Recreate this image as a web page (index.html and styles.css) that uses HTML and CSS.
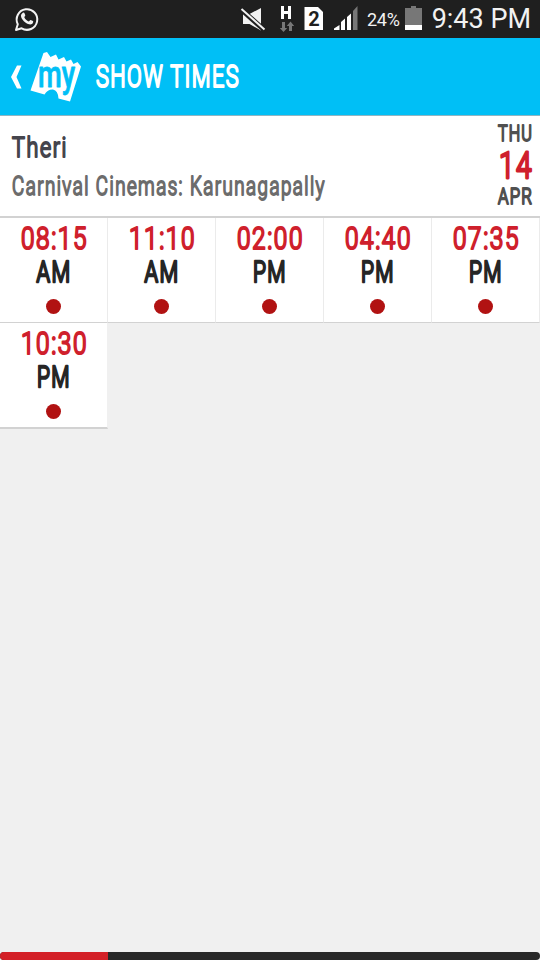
FILE: index.html
```html
<!DOCTYPE html>
<html lang="en">
<head>
    <meta charset="UTF-8">
    <meta name="viewport" content="width=device-width, initial-scale=1.0">
    <title>Show Times</title>
    <link rel="stylesheet" href="styles.css">
</head>
<body>

    <div class="status">
        <svg class="whatsapp" width="26" height="26" viewBox="0 0 26 26">
            <path d="M2 24 L3.8 18.2 A10.3 10.3 0 1 1 7.6 22.3 Z" fill="none" stroke="#f2f2f2" stroke-width="2" stroke-linejoin="round"/>
            <path d="M8.3 7.2 C9.3 6.2 10.2 6.5 10.5 7.2 L11.3 9.3 C11.5 10 10.3 10.8 10.3 11.3 C11.2 13.3 12.7 14.7 14.7 15.4 C15.3 15.4 16 13.9 16.6 14 L19 15.1 C19.5 15.5 19.2 17.2 18 18 C16.5 19 14 18.4 11.7 16.8 C9 14.9 7.3 12.3 7 10.2 C6.9 9 7.4 8 8.3 7.2 Z" fill="#f2f2f2"/>
        </svg>
        <svg class="indicators" width="118" height="28" viewBox="0 0 118 28">
            <!-- muted speaker -->
            <path d="M2 9 H8.500 L20 3 V25.500 L8.500 19 H2 Z" fill="#f2f2f2"/>
            <path d="M-1 3.500 L25 26.500" stroke="#1f1f1f" stroke-width="5"/>
            <path d="M0.500 4 L23.500 24.500" stroke="#f2f2f2" stroke-width="2"/>
            <!-- data -->
            <path d="M41.500 1 V14 M48.500 1 V14 M41.500 7.500 H48.500" stroke="#fff" stroke-width="3" fill="none"/>
            <path d="M41 17 h3 v6 h2.200 l-3.700 4 l-3.700 -4 h2.200 Z M48 26 h3 v-5 h2.200 l-3.700 -4.500 l-3.700 4.500 h2.200 Z" fill="#777"/>
            <!-- sim -->
            <path d="M63.500 2 H77 L82 7 V25 H63.500 Z" fill="#fff"/>
            <text class="sim" x="73" y="21" text-anchor="middle">2</text>
            <!-- signal -->
            <path d="M93 25 V23.500 L98.500 20 V25 Z M100 25 V17 L104 13.500 V25 Z M106 25 V12 L110 8.500 V25 Z" fill="#fff"/>
            <path d="M112 25 V6 L116.500 1 V25 Z" fill="#777"/>
        </svg>
        <span class="percent">24%</span>
        <span class="battery"></span>
        <span class="clock">9:43 PM</span>
    </div>

    <div class="header">
        <svg class="back" width="12" height="24" viewBox="0 0 12 24">
            <path d="M7 0.500 H11.500 L6.500 12 L11.500 23.500 H7 L1 12 Z" fill="#fff"/>
        </svg>
        <svg class="logo" width="52" height="52" viewBox="0 0 52 52">
            <path d="M13.500 2 L17 1 L20.500 6 L26 3.500 L28.500 8.500 L34 6 L36.500 10.500 L41 8.500 L43.500 13 L47.500 11 L51 15.500 L40 50.500 L28.500 47.500 Q28 39.500 23 38.500 Q18 38 14.500 43.500 L0.500 39.500 Z" fill="#fff"/>
            <text class="my" x="8" y="35.500" textLength="37" lengthAdjust="spacingAndGlyphs">my</text>
        </svg>
        <svg class="title" width="146" height="36"><text x="1" y="28" textLength="144" lengthAdjust="spacingAndGlyphs">SHOW TIMES</text></svg>
    </div>

    <div class="venue">
        <div class="names">
            <svg class="movie" width="60" height="34"><text x="0" y="24" textLength="56" lengthAdjust="spacingAndGlyphs">Theri</text></svg>
            <svg class="cinema" width="318" height="36"><text x="0" y="27.500" textLength="314" lengthAdjust="spacingAndGlyphs">Carnival Cinemas: Karunagapally</text></svg>
        </div>
        <div class="date">
            <svg class="small" width="36" height="27"><text x="1" y="20" textLength="35" lengthAdjust="spacingAndGlyphs">THU</text></svg>
            <svg class="day" width="36" height="38"><text x="2" y="30" textLength="34" lengthAdjust="spacingAndGlyphs">14</text></svg>
            <svg class="small" width="36" height="27"><text x="1" y="18" textLength="35" lengthAdjust="spacingAndGlyphs">APR</text></svg>
        </div>
    </div>

    <div class="times" id="times"></div>

    <div class="progress"><div class="bar"></div></div>

    <script>
        var shows = ['08:15 AM', '11:10 AM', '02:00 PM', '04:40 PM', '07:35 PM', '10:30 PM'];

        document.getElementById('times').innerHTML = shows.map(function (show) {
            var part = show.split(' ');
            var w = part[1] === 'AM' ? 35 : 34;
            return '<div class="show">' +
                '<svg class="hour" width="70" height="36"><text x="2" y="31" textLength="67" lengthAdjust="spacingAndGlyphs">' + part[0] + '</text></svg>' +
                '<svg class="half" width="70" height="34"><text x="' + (35 - w / 2) + '" y="29" textLength="' + w + '" lengthAdjust="spacingAndGlyphs">' + part[1] + '</text></svg>' +
                '<span class="dot"></span></div>';
        }).join('');
    </script>

</body>
</html>
```
FILE: styles.css
```css
body {
    margin: 0;
    height: 960px;
    display: flex;
    flex-direction: column;
    background: #f0f0f0;
    font-family: Roboto, sans-serif;
    overflow: hidden;
}

svg {
    display: block;
    flex: none;
    overflow: visible;
}

/* rounded, condensed lettering */
.title text, .movie text, .cinema text, .date text, .show text {
    font-weight: 300;
    letter-spacing: 2px;
    stroke-width: 2px;
    stroke-linejoin: round;
}

.status {
    height: 38px;
    box-sizing: border-box;
    display: flex;
    align-items: center;
    padding: 0 9px 0 14px;
    background: #1f1f1f;
    color: #f2f2f2;
    white-space: nowrap;
}

.indicators {
    margin-left: 201px;
}

.sim {
    font-size: 20px;
    font-weight: 700;
    fill: #1f1f1f;
}

.percent {
    width: 33px;
    margin-left: 8px;
    font-size: 18px;
    letter-spacing: -0.3px;
    margin-top: 1px;
}

.battery {
    width: 17px;
    height: 24px;
    margin-left: 5px;
    margin-top: -2px;
    background:
        linear-gradient(#777, #777) 6px 0 / 5px 2px no-repeat,
        linear-gradient(#777 17px, #fff 17px) 0 2px / 17px 22px no-repeat;
}

.clock {
    margin-left: auto;
    font-size: 27px;
}

.header {
    height: 77px;
    display: flex;
    align-items: center;
    background: #00bff6;
    padding-left: 10px;
}

.logo {
    margin-left: 8px;
}

.my {
    font-size: 37px;
    font-weight: 500;
    fill: #00bff6;
    stroke: #00bff6;
    stroke-width: 0.8px;
    stroke-linejoin: round;
}

.title {
    margin-left: 13px;
}

.title text {
    font-size: 31px;
    fill: #fff;
    stroke: #fff;
    stroke-width: 2.2px;
}

.venue {
    height: 103px;
    box-sizing: border-box;
    display: flex;
    justify-content: space-between;
    padding: 5px 7px 0 12px;
    background: #fff;
    border-top: 1px solid #8fb5c2;
    border-bottom: 2px solid #d2d2d2;
}

.names {
    padding-top: 12px;
}

.movie text {
    font-size: 27px;
    fill: #45454d;
    stroke: #45454d;
}

.cinema text {
    font-size: 26px;
    fill: #6c6c6c;
    stroke: #6c6c6c;
    stroke-width: 1.9px;
}

.small text {
    font-size: 22px;
    letter-spacing: 1.5px;
    fill: #505050;
    stroke: #505050;
}

.day text {
    font-size: 37px;
    fill: #cf202c;
    stroke: #cf202c;
    stroke-width: 2.8px;
}

.times {
    display: grid;
    grid-template-columns: repeat(5, 108px);
    grid-auto-rows: 105px;
    flex: 1;
    align-content: start;
}

.show {
    display: flex;
    flex-direction: column;
    align-items: center;
    background: #fff;
    border-right: 1px solid #ebebeb;
    border-bottom: 1px solid #d2d2d2;
}

.show:last-child {
    border-right-color: #f0f0f0;
    border-bottom-width: 2px;
    height: 104px;
}

.hour text {
    font-size: 31px;
    fill: #cf202c;
    stroke: #cf202c;
    stroke-width: 2.2px;
}

.half {
    margin-top: -1px;
}

.half text {
    font-size: 30px;
    fill: #262626;
    stroke: #262626;
    stroke-width: 2.6px;
}

.dot {
    width: 15px;
    height: 15px;
    margin-top: 12px;
    border-radius: 50%;
    background: #b11212;
}

.progress {
    height: 8px;
    background: #282828;
    border-radius: 4px;
    overflow: hidden;
}

.bar {
    width: 20%;
    height: 8px;
    background: #d32027;
}
```
